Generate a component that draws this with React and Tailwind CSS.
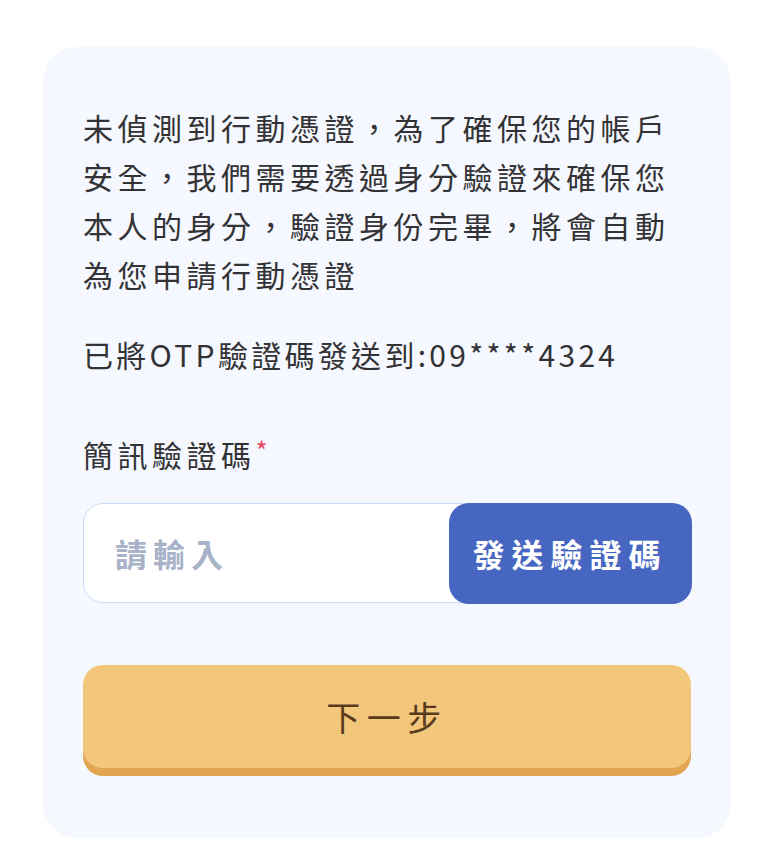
import React, { useState } from "react";

export default function App() {
  const [code, setCode] = useState("");

  return (
    <div className="min-h-screen bg-white pt-[47px] pl-[43px] font-['Noto_Sans_CJK_TC',sans-serif]">
      <div className="w-[688px] rounded-[34px] bg-[#f5f8fe] px-10 pt-[56px] pb-[70px]">
        <p className="text-[30px] leading-[49px] tracking-[4.5px] text-[#333336]">
          未偵測到行動憑證，為了確保您的帳戶安全，我們需要透過身分驗證來確保您本人的身分，驗證身份完畢，將會自動為您申請行動憑證
        </p>
        <p className="mt-[31px] text-[30px] leading-[49px] tracking-[3.3px] text-[#333336]">
          已將OTP驗證碼發送到:09****4324
        </p>

        <label className="mt-[51px] block text-[30px] leading-[49px] tracking-[4.5px] text-[#333336]">
          簡訊驗證碼
          <span className="relative -top-[6px] text-[26px] tracking-normal text-[#e8475f]">*</span>
        </label>

        <div className="mt-[23px] flex h-[100px] rounded-[20px] border-[1.5px] border-[#c9dcf7] bg-white">
          <input
            value={code}
            onChange={(e) => setCode(e.target.value)}
            placeholder="請輸入"
            className="min-w-0 flex-1 rounded-l-[20px] bg-transparent pl-[31px] text-[32px] font-bold tracking-[6px] text-[#333] outline-none placeholder:text-[#a8b3c8]"
          />
          <button className="-my-[1.5px] -mr-[1.5px] w-[243px] rounded-[20px] bg-[#4766c2] text-[32px] font-bold tracking-[7px] text-white">
            發送驗證碼
          </button>
        </div>

        <button className="mt-[62px] h-[103px] w-full rounded-[20px] bg-[#f2c67b] text-[34px] tracking-[6.5px] text-[#5a3a1d] shadow-[0_8px_0_#e2a653]">
          下一步
        </button>
      </div>
    </div>
  );
}
